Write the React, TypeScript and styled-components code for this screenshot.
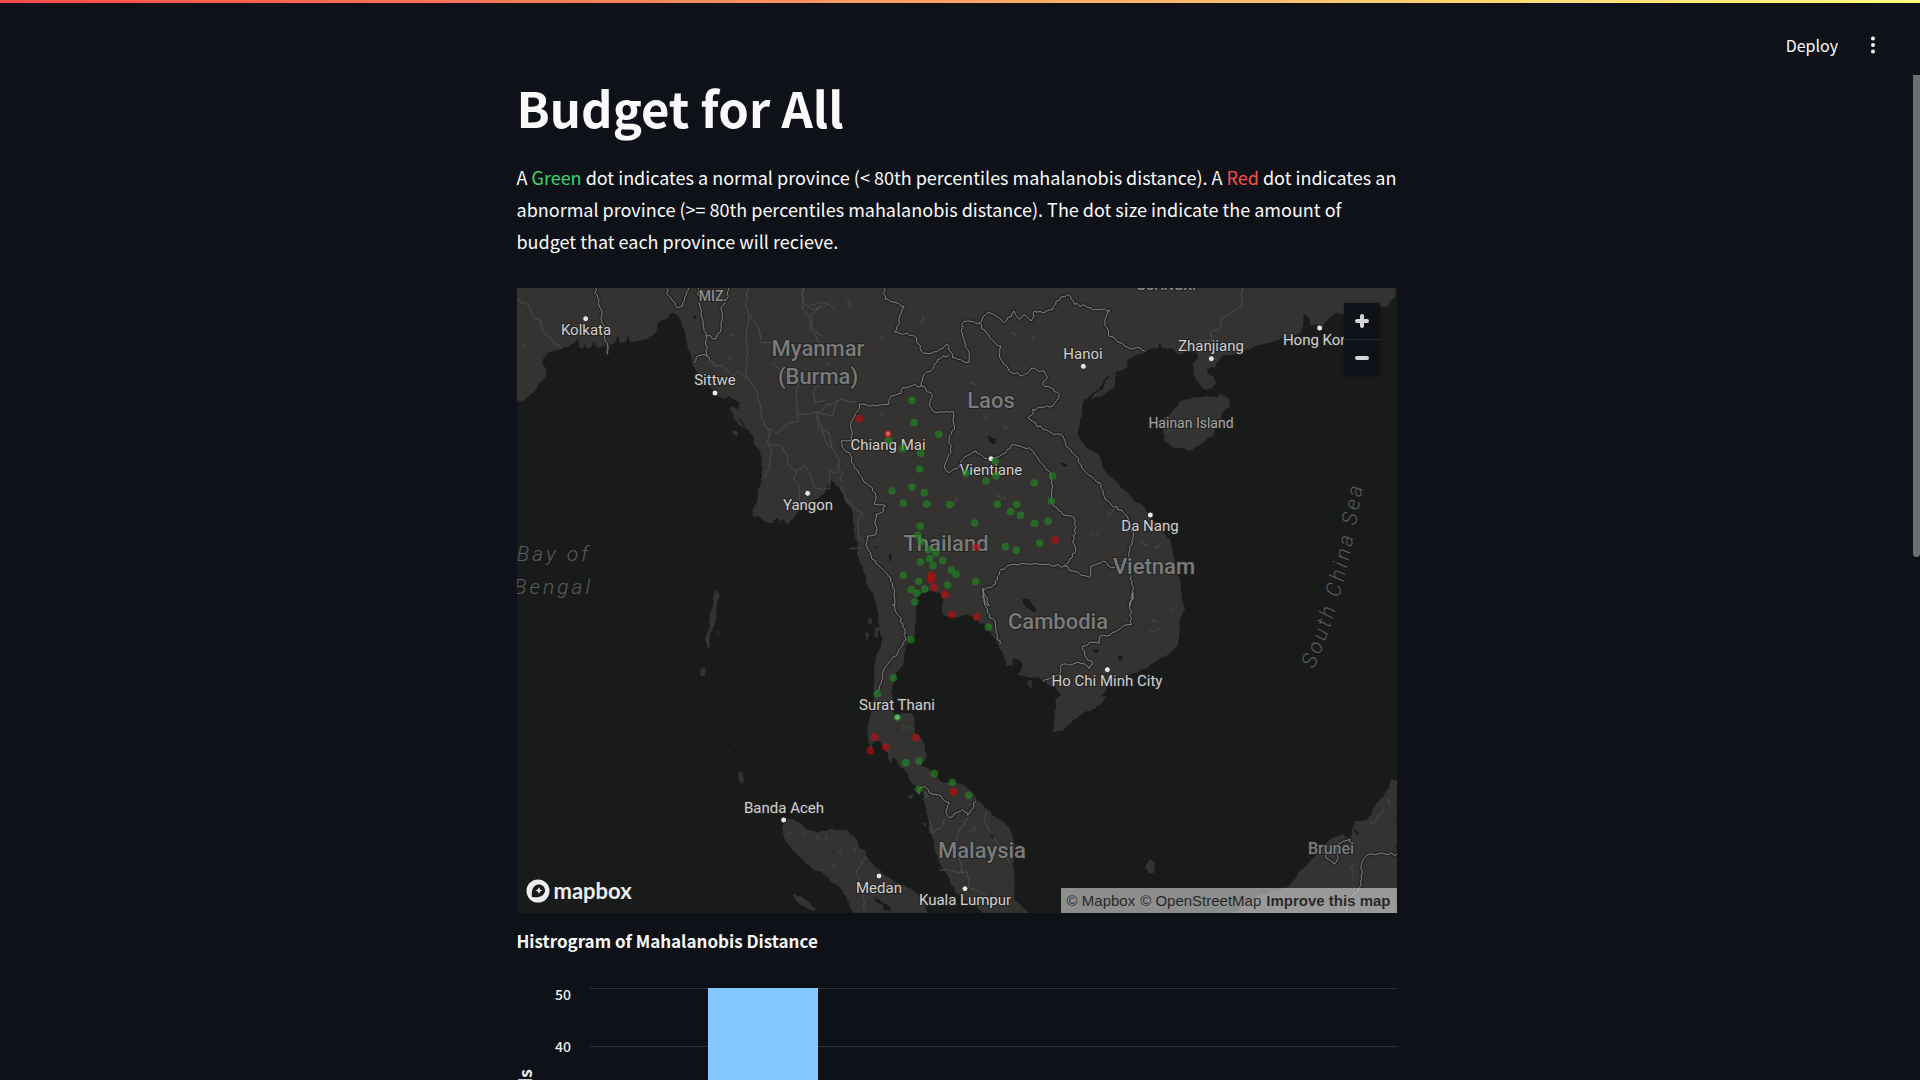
import React from "react";
import styled, { createGlobalStyle } from "styled-components";

const sans = '"Noto Sans CJK JP", "Noto Sans", sans-serif';
const mapFont = 'Roboto, "Noto Sans", sans-serif';

const GlobalStyle = createGlobalStyle`
  * { box-sizing: border-box; }
  body {
    margin: 0;
    background: #0e1117;
    color: #fafafa;
    font-family: ${sans};
  }
`;

const Page = styled.div`
  display: flex;
  flex-direction: column;
  height: 100vh;
  overflow: hidden;
  background: #0e1117;
`;

const Decoration = styled.div`
  flex: none;
  height: 3px;
  background: linear-gradient(90deg, #ff4b4b, #fffd80);
`;

const Header = styled.header`
  flex: none;
  display: flex;
  align-items: center;
  justify-content: flex-end;
  gap: 28px;
  height: 72px;
  padding: 12px 40px 0 0;
`;

const HeaderButton = styled.button`
  display: flex;
  align-items: center;
  justify-content: center;
  min-width: 14px;
  height: 32px;
  padding: 0;
  border: 0;
  background: none;
  color: #fafafa;
  font: 400 16px/32px ${sans};
  cursor: pointer;
`;

const Body = styled.div`
  flex: 1;
  display: flex;
  min-height: 0;
`;

const Main = styled.main`
  flex: 1;
  overflow-y: auto;
  scrollbar-width: none;
`;

const Track = styled.div`
  width: 7px;
`;

const Thumb = styled.div`
  height: 48%;
  border-radius: 0 0 4px 4px;
  background: #6e6f74;
`;

const Column = styled.div`
  display: flex;
  flex-direction: column;
  max-width: 880px;
  margin: 0 auto;
`;

const Title = styled.h1`
  margin: 0 0 22px;
  font-size: 49px;
  line-height: 64px;
  font-weight: 700;
`;

const Paragraph = styled.p`
  margin: 0 0 31px;
  font-size: 18px;
  line-height: 32px;
`;

const Mark = styled.span<{ $color: string }>`
  color: ${(p) => p.$color};
`;

const MapBox = styled.section`
  position: relative;
  overflow: hidden;
  background: #191a1a;
`;

const MapDrawing = styled.svg`
  display: block;
  width: 100%;
  height: auto;
`;

const Label = styled.text<{ $kind: Kind }>`
  font-family: ${mapFont};
  font-size: ${(p) => kinds[p.$kind].size}px;
  font-weight: ${(p) => kinds[p.$kind].weight};
  fill: ${(p) => kinds[p.$kind].fill};
  stroke: #232323;
  stroke-width: 2px;
  paint-order: stroke;
`;

const SeaLabel = styled.text`
  font-family: ${mapFont};
  font-size: 21px;
  font-style: italic;
  font-weight: 300;
  letter-spacing: 3px;
  fill: #5a5b5b;
`;

const Zoom = styled.div`
  position: absolute;
  top: 15px;
  right: 17px;
  display: flex;
  flex-direction: column;
  background: #0e1117;
  box-shadow: 0 0 0 2px rgba(0, 0, 0, 0.1);
`;

const ZoomButton = styled.button`
  display: flex;
  align-items: center;
  justify-content: center;
  width: 36px;
  height: 36px;
  padding: 0;
  border: 0;
  background: none;
  color: #d6d6d6;
  cursor: pointer;

  & + & {
    height: 37px;
    border-top: 1px solid #262730;
  }
`;

const Logo = styled.a`
  position: absolute;
  left: 9px;
  bottom: 10px;
  display: flex;
  align-items: center;
  gap: 4px;
  color: #eee;
  font: 700 22px/24px Lato, sans-serif;
  text-decoration: none;
`;

const Attribution = styled.div`
  position: absolute;
  right: 0;
  bottom: 0;
  display: flex;
  gap: 5px;
  padding: 0 6px;
  background: rgba(255, 255, 255, 0.5);
  font: 15px/25px "Liberation Sans", sans-serif;
`;

const Credit = styled.a<{ $strong?: boolean }>`
  color: rgba(0, 0, 0, 0.75);
  font-weight: ${(p) => (p.$strong ? 700 : 400)};
  text-decoration: none;
`;

const ChartTitle = styled.h2`
  margin: 12px 0 2px;
  font-size: 17px;
  line-height: 32px;
  font-weight: 700;
`;

const Chart = styled.svg`
  display: block;
  width: 100%;
  height: auto;
`;

const AxisText = styled.text<{ $title?: boolean }>`
  font-family: ${sans};
  font-size: ${(p) => (p.$title ? 18 : 14)}px;
  font-weight: ${(p) => (p.$title ? 700 : 500)};
  fill: #e6eaf1;
`;

type Kind = "city" | "country" | "small" | "state" | "island";
const kinds: Record<Kind, { size: number; weight: number; fill: string }> = {
  city: { size: 15, weight: 400, fill: "#cfcfcf" },
  island: { size: 14, weight: 400, fill: "#a3a3a3" },
  country: { size: 22, weight: 500, fill: "#7b7b7b" },
  small: { size: 16, weight: 500, fill: "#7b7b7b" },
  state: { size: 14, weight: 500, fill: "#8c8c8c" },
};

/* The survey is split in six sheets at three units per map pixel.
   A letter in a line of points switches to that sheet. */
const sheets: Record<string, [number, number]> = {
  A: [-3, -6],
  B: [837, -6],
  C: [1719, -6],
  D: [-3, 894],
  E: [837, 894],
  F: [1719, 894],
};

type Pt = [number, number];
const at = (s: string, x: number, y: number): Pt => [(sheets[s][0] + x) / 3, (sheets[s][1] + y) / 3];

function points(src: string): Pt[] {
  let sheet = "A";
  const out: Pt[] = [];
  src.trim().split(/\s+/).forEach((tok) => {
    if (sheets[tok]) sheet = tok;
    else {
      const [x, y] = tok.split(",").map(Number);
      out.push(at(sheet, x, y));
    }
  });
  return out;
}

/* Adds fine bends between surveyed points, the same on every draw. */
function rough(src: string, amount: number, close = false) {
  const base = points(src);
  if (close) base.push(base[0]);
  let seed = 7;
  const rnd = () => {
    seed = (seed * 16807) % 2147483647;
    return seed / 2147483647 - 0.5;
  };
  const out: Pt[] = [base[0]];
  for (let i = 1; i < base.length; i++) {
    const [ax, ay] = base[i - 1];
    const [bx, by] = base[i];
    const len = Math.hypot(bx - ax, by - ay);
    const n = Math.max(1, Math.round(len / 3));
    const edge = len > 200;
    for (let k = 1; k <= n; k++) {
      const t = k / n;
      const j = k === n || edge ? 0 : rnd() * amount;
      out.push([ax + (bx - ax) * t - ((by - ay) / len) * j, ay + (by - ay) * t + ((bx - ax) / len) * j]);
    }
  }
  return "M" + out.map((p) => p[0].toFixed(1) + " " + p[1].toFixed(1)).join("L") + (close ? "Z" : "");
}

const land = [
  `A 0,348 20,345 40,330 60,310 72,290 92,268 90,250 80,235 82,215 100,198 130,190 160,180 185,160 190,185 200,188 205,170 215,188 225,185 232,165 245,185 262,180 290,175 300,165 305,150 310,172 330,168 338,148 345,168 365,165 385,160 410,150 420,140 425,115 435,105 450,100 460,88 472,80 485,90 495,105 505,130 510,160 515,190 525,205 528,230 540,255 550,270 570,290 585,305 600,325 620,338 640,330 655,340 672,350 668,370 650,360 640,368 655,390 675,400 685,420 700,435 712,450 712,470 725,485 735,510 735,540 740,550 735,590 725,610 725,640 715,660 710,690 730,690 745,705 770,712 785,695 790,712 800,700 812,716 830,700 850,670 870,660 900,640 925,625 935,600 945,580
   B 115,590 140,620 150,650 165,665 170,700 175,740 185,780 185,810 200,850 210,870 215,900 230,920 240,950
   E 245,80 250,130 260,160 250,190 240,220 235,260 232,300 235,340 225,380 215,420 215,450 222,500 232,470 240,465 255,470 270,495 285,530 288,510 300,520 310,540 335,560 340,580 355,598 375,610 385,650 392,670 395,700 400,740 415,765 415,790 425,810 430,830 440,850 460,880 475,910 500,940 545,965 565,985 700,985 680,965 655,940 655,870 650,840 655,770 650,745 630,715 600,695 575,670 545,645 530,620 500,595 480,590 440,590 425,575 410,560 395,545 375,540 390,515 390,500 380,460 360,445 355,395 345,380 320,380 305,400 290,375 288,310 295,280 300,260 320,240 325,200 335,170 355,150 360,110 360,50 365,25 400,15 430,20 442,40 440,85 465,92 480,95 500,88 520,88 545,105 570,120 585,140 600,160 610,190 625,210 630,240 650,240 650,220 670,222 678,240 665,265 690,272 730,275 755,295 780,305 795,325 780,340 775,400 770,440 800,435 820,415 850,390 890,370 920,350
   F 48,330 30,330 50,310 55,290 75,285 100,280 130,262 160,250 200,225 240,200 262,180 268,130 270,100 285,65 275,40 272,0
   C 272,895 265,870 255,830 245,790 240,760 215,735 180,690 165,665 130,640 100,610 60,570 40,545 30,515 20,500 0,490
   B 875,488 860,470 845,440 850,420 858,390 860,350 880,330 910,310 930,275 960,255
   B 958,300 920,330
   C 0,340 20,320 40,310 45,285 65,262 90,255 110,245 115,220 140,205 165,200 180,190 205,185 210,165 215,185 250,190 265,205 290,195 320,200 325,215 308,235 310,260 325,290 340,308 365,308 378,290 370,270 355,265 350,250 375,245 380,230 395,210 420,208 450,200 480,190 500,178 530,172 560,165 575,155 590,170 600,150 630,140 640,120 642,85 655,95 665,120 680,115 690,130 720,95 740,80 760,85 800,70 890,62 900,45 918,30 921,0 A 0,0`,
  `D 800,705 800,740 805,760 825,785 860,820 890,850 920,860 940,880 960,895 E 140,915 150,930 175,985 395,985 385,940 360,920 340,905 300,890 270,870 240,845 210,810 210,795 190,785 185,765 150,730 100,730 70,738 30,730 0,705 D 820,698`,
  "D 838,935 850,930 870,942 902,970 895,975 865,958 840,945",
  "E -10,925 20,935 60,970 50,975 10,955",
  "F 430,985 500,930 590,905 605,890 630,855 660,825 680,800 700,780 720,760 760,745 780,760 795,705 815,705 835,700 855,660 870,640 895,610 905,580 921,585 921,985",
  "C 218,400 240,385 265,355 270,345 310,335 350,330 385,335 388,322 415,335 420,360 395,385 380,420 370,450 345,465 325,480 300,495 280,485 250,485 222,465 220,430",
  "D 600,12 608,20 608,40 600,65 602,95 590,130 582,150 582,180 575,188 568,165 570,150 580,125 582,85 590,60 592,30",
  "D 560,243 570,255 568,272 555,270 553,255",
  "D 665,562 680,560 684,578 678,594 668,580",
  "D 604,132 610,134 606,148",
  "D 632,492 640,494 638,500",
  "F 180,820 195,835 192,860 175,862 165,842",
  "A 650,435 668,440 662,452 650,445",
  "A 650,388 670,395 682,425 665,415",
  "E 695,285 710,285 705,310 698,300",
  "E 335,630 355,625 350,638 338,638",
  "E 215,100 230,98 228,115 216,112",
  "E 208,140 222,145 215,165 210,155",
  "E 236,125 248,122 244,160 236,150",
  "E 380,712 392,712 388,722",
];

const water = [
  "B 575,450 600,460 595,475 580,470",
  "E 680,38 700,40 712,60 722,75 712,78 690,62 680,50",
  "B 280,800 286,805 286,830 280,822",
  "B 235,780 245,783 237,790",
  "B 795,530 818,538 805,542",
  "E 580,740 597,750 588,760",
  "E 235,935 255,945 285,965 285,975 262,972 262,958 240,948",
  "F 85,210 98,208 95,222 86,222",
  "F 10,192 26,194 18,202",
  "E 893,192 910,192 902,204",
  "F 790,730 806,738 800,750",
  "A 534,88 542,90 536,102",
];

const borders = [
  "A 572,150 600,158 615,130 618,90 615,65 632,40 640,4",
  "A 450,4 458,30 470,45 485,65 500,60 505,35 518,4",
  "A 235,4 245,35 250,60 258,75 255,95 265,120 265,150 275,180 275,205",
  "A 545,4 552,60 560,100 570,150 572,210 555,208 540,215 535,230",
  "A 572,210 580,222",
  "B 262,4 268,40 300,50 325,62 310,95 310,115 295,138 350,148 362,155 375,195 400,203 430,190 455,175 470,215 500,225 520,228 515,190 500,150 497,115 515,105 548,112 575,80 600,90 625,110 655,75 670,100 685,85 705,105 715,75 740,80 770,70 780,45 815,25 835,55 870,60 890,72 C 25,70 60,72 45,110 55,150 90,170 120,188 150,185 165,195",
  "B 460,205 425,220 410,250 385,265 375,300",
  "B 375,300 350,298 320,305 315,322 285,330 278,355 240,360 190,355 185,375 170,400 165,430 170,465 150,465 135,465 145,490 160,500 175,545 200,580 230,605 240,640 235,655 268,660 255,680 240,685 240,745 215,750 210,775 225,810 260,850 285,875 295,920 295,960 E 290,55 310,90 330,155 305,200 260,260 250,300 240,320",
  "B 375,300 390,310 408,325 400,360 415,378 470,375 475,420 460,460 465,500 445,540 460,560 490,540 500,520 540,495 575,518 600,515 630,500 645,478 700,485 730,525 765,565 770,600 765,645 800,685 835,695 840,725 830,765 838,800 805,840",
  "B 548,112 570,140 600,175 615,180 610,210 640,255 680,270 705,248 745,255 755,275 740,295 765,305 790,325 770,360 710,370 710,385 695,395 740,430 800,450 810,480 840,510 870,560 C 30,590 45,640 100,680 115,700 130,750 120,790 120,880 130,910 120,960 F 130,20 120,70 125,115 100,120 50,150 30,150 28,172 0,168 E 860,180 865,205 890,235 880,248 855,232 795,238 790,265 740,285",
  "B 805,840 740,835 650,835 615,850 605,880 585,905 562,912 565,940 580,960 E 560,5 565,50 575,70 580,95 598,105 600,140 612,175",
  "B 805,840 830,855 880,875 885,840 C 40,825 65,845 90,838 115,830",
  "E 370,625 372,605 385,600 400,620 435,630 440,640 460,650 450,680 460,695 500,670 515,688 540,645",
  "F 921,805 880,802 830,808 815,830 815,880 805,915 790,925 770,975",
  "F 700,800 715,820 732,835 745,815 735,780 760,765 780,760 790,800",
];

const districts = [
  "A 0,40 40,60 50,90 75,105 80,135 110,165 135,185",
  "A 695,6 690,60 700,90 690,150 695,200 690,250 695,275 720,310 740,400 760,440 755,470 765,490 760,540 750,572 740,570",
  "A 700,85 730,130 735,170 780,168",
  "A 580,222 600,240 620,240 650,270 665,255 690,275",
  "A 760,430 785,440 810,415 845,405 845,385 910,380 930,360 960,350",
  "A 845,385 840,320 850,280 790,250 770,230",
  "A 860,6 860,70 890,100 880,130 900,150 920,190",
  "A 880,60 910,50 940,55 955,70",
  "A 765,480 790,475 810,500 820,540 840,555 865,537 885,570 895,605 940,610 940,550 960,560",
  "A 840,555 835,580 850,600 850,640",
  "A 900,385 920,430 930,470 950,490",
  "A 910,290 890,320 900,350 930,340",
  "B 60,380 70,430 100,440 110,490 130,520 125,550 140,560 135,585",
  "B 60,380 110,390 120,345 140,340 180,350",
  "B 135,600 150,640 180,670 200,680 185,710 190,760 210,770",
  "B 160,790 190,785",
  "B 20,6 20,50 50,70 80,60 40,90 50,130 80,150",
  "C 455,6 455,60 395,100 390,130 365,135 362,165 330,165 320,195",
  "E 450,690 440,720 410,740 400,705",
  "E 515,690 505,715 490,730 480,770 500,860 430,850",
  "E 570,680 565,710 585,740 605,770 640,830",
  "E 500,860 515,860 520,905 560,920 600,960",
  "E 210,810 180,860 200,900 205,970",
  "E 385,620 395,625 380,640",
];

const relief = [
  "B 600,630 630,640", "B 480,630 475,660", "B 120,180 130,190", "B 640,140 660,150", "B 90,230 100,240",
  "B 290,490 305,500", "B 420,760 440,775", "B 150,40 165,60", "B 250,160 262,155", "B 380,90 375,110",
  "B 520,290 540,300", "B 620,420 632,430", "B 560,385 570,400", "B 700,150 712,160", "B 250,390 262,382",
  "C 50,690 75,670", "C 150,770 175,775", "C 195,790 210,780", "C 0,750 25,740", "C 230,440 245,432",
  "F 180,140 210,128", "F 185,105 200,110", "F 240,80 255,70", "F 840,720 860,700 880,670", "F 785,830 790,880",
  "F 890,640 900,660", "F 845,760 850,765", "D 815,750 832,740", "D 857,738 866,746", "D 928,750 930,765",
  "D 945,830 955,850", "E 60,750 70,762", "E 125,800 138,806", "E 170,780 175,800", "E 318,415 322,435",
  "E 335,425 350,430", "E 520,740 545,720", "A 640,150 655,148", "A 20,180 30,175", "A 640,210 640,225",
];

const green = `B 348,343 354,410 428,445 278,463 319,488 374,502 371,549 348,604 288,615 385,620 322,651 392,654 461,656 510,562 597,526 600,569 570,585 715,591 769,570 766,645 604,655 662,655 644,677 674,688 716,712 757,706 536,711 731,771 628,782 661,793 373,721 365,748 375,767 397,791 419,800 401,818 440,824 373,828 411,839 466,852 480,865 322,868 368,886 539,886 455,897 346,911 386,909 363,922 357,948
 E 345,161 292,276 244,323 304,394 329,530 369,525 415,563 469,589 368,610 518,628 577,124`;
const red = `B 190,398 276,444 541,784 777,762 407,868 406,882 414,905 447,926 E 468,86 541,92 236,454 223,494 269,484 360,455 472,617`;

const cities = `A 209,98 597,321 875,622 B 276,443 585,518 862,241 C 364,218 689,126 181,687 F 52,251 E 304,394 249,870 507,908 D 803,702`;

const labels: [string, string, number, number, Kind][] = [
  ["Kolkata", "A", 210, 148, "city"],
  ["Sittwe", "A", 597, 298, "city"],
  ["Yangon", "A", 875, 672, "city"],
  ["MIZ.", "A", 592, 45, "state"],
  ["Myanmar", "B", 66, 211, "country"],
  ["(Burma)", "B", 66, 294, "country"],
  ["Chiang Mai", "B", 277, 491, "city"],
  ["Laos", "B", 586, 365, "country"],
  ["Vientiane", "B", 585, 566, "city"],
  ["Hanoi", "B", 862, 219, "city"],
  ["Thailand", "B", 451, 794, "country"],
  ["GUANGXI", "C", 227, 12, "state"],
  ["Zhanjiang", "C", 363, 196, "city"],
  ["Hong Kong", "C", 689, 176, "city"],
  ["Hainan Island", "C", 303, 426, "island"],
  ["Da Nang", "C", 181, 735, "city"],
  ["Vietnam", "C", 192, 865, "country"],
  ["Cambodia", "E", 785, 129, "country"],
  ["Ho Chi Minh City", "F", 51, 301, "city"],
  ["Surat Thani", "E", 304, 371, "city"],
  ["Banda Aceh", "D", 803, 680, "city"],
  ["Medan", "E", 250, 920, "city"],
  ["Kuala Lumpur", "E", 508, 958, "city"],
  ["Malaysia", "E", 558, 816, "country"],
  ["Brunei", "F", 724, 803, "small"],
];

function Cartography() {
  return (
    <MapDrawing viewBox="0 0 880 625" role="img" aria-label="Map of provinces">
      <g fill="#343332">
        {land.map((d) => <path key={d} d={rough(d, 2, true)} />)}
      </g>
      <g fill="none" stroke="#3f3e3e" strokeWidth="2">
        {relief.map((d) => <path key={d} d={rough(d, 3)} />)}
      </g>
      <g fill="#191a1a">
        {water.map((d) => <path key={d} d={rough(d, 1, true)} />)}
      </g>
      <g fill="none" stroke="#4d4d4d" strokeWidth="1">
        {districts.map((d) => <path key={d} d={rough(d, 2)} />)}
      </g>
      <g fill="none" stroke="#262626" strokeWidth="4" strokeLinejoin="round">
        {borders.map((d) => <path key={d} d={rough(d, 3)} />)}
      </g>
      <g fill="none" stroke="#838383" strokeWidth="1" strokeLinejoin="round">
        {borders.map((d) => <path key={d} d={rough(d, 3)} />)}
      </g>
      <SeaLabel x="74" y="273" textAnchor="end">Bay of</SeaLabel>
      <SeaLabel x="76" y="306" textAnchor="end">Bengal</SeaLabel>
      <path id="sea-line" fill="none" d="M797 381 Q832 300 848 180" />
      <SeaLabel><textPath href="#sea-line">South China Sea</textPath></SeaLabel>
      {labels.map(([text, s, x, y, kind]) => {
        const [px, py] = at(s, x, y);
        return <Label key={text} $kind={kind} x={Math.round(px)} y={Math.round(py)} textAnchor="middle">{text}</Label>;
      })}
      <g fill="#e6e6e6" stroke="#222" strokeWidth="1">
        {points(cities).map(([x, y]) => <circle key={x} cx={x} cy={y} r="3" />)}
      </g>
      <g fill="rgb(33,140,33)" fillOpacity="0.62">
        {points(green).map(([x, y], i) => <circle key={i} cx={x} cy={y} r="3.8" />)}
      </g>
      <g fill="rgb(200,10,10)" fillOpacity="0.62">
        {points(red).map(([x, y], i) => <circle key={i} cx={x} cy={y} r="3.8" />)}
      </g>
    </MapDrawing>
  );
}

function Histogram() {
  return (
    <Chart viewBox="0 0 880 360" role="img" aria-label="Histogram of Mahalanobis distance">
      {[50, 40, 30, 20, 10, 0].map((v, i) => {
        const y = 30 + Math.round(i * 57.5);
        return (
          <g key={v}>
            <rect x="73" y={y - 1} width="807" height="1" fill="#2f3139" />
            <AxisText x="54" y={i === 0 ? 41 : y + 5} textAnchor="end">{v}</AxisText>
          </g>
        );
      })}
      <rect x="191" y="29" width="110" height="288" fill="#83c9ff" />
      <AxisText $title textAnchor="end" transform="translate(15 110) rotate(-90)">Count of Records</AxisText>
    </Chart>
  );
}

export default function App() {
  return (
    <Page>
      <GlobalStyle />
      <Decoration />
      <Header>
        <HeaderButton>Deploy</HeaderButton>
        <HeaderButton aria-label="Main menu">
          <svg width="4" height="18" viewBox="0 0 4 18" fill="#fafafa">
            <circle cx="2" cy="2.5" r="2" />
            <circle cx="2" cy="9" r="2" />
            <circle cx="2" cy="15.5" r="2" />
          </svg>
        </HeaderButton>
      </Header>
      <Body>
        <Main>
          <Column>
            <Title>Budget for All</Title>
            <Paragraph>
              A <Mark $color="#3dd56d">Green</Mark> dot indicates a normal province (&lt; 80th percentiles mahalanobis
              distance). A <Mark $color="#ff4b4b">Red</Mark> dot indicates an abnormal province (&gt;= 80th percentiles
              mahalanobis distance). The dot size indicate the amount of budget that each province will recieve.
            </Paragraph>
            <MapBox>
              <Cartography />
              <Zoom>
                <ZoomButton aria-label="Zoom in">
                  <svg width="16" height="16" viewBox="0 0 16 16" stroke="currentColor" strokeWidth="4" strokeLinecap="round">
                    <path d="M8 3v10M3 8h10" />
                  </svg>
                </ZoomButton>
                <ZoomButton aria-label="Zoom out">
                  <svg width="16" height="16" viewBox="0 0 16 16" stroke="currentColor" strokeWidth="4" strokeLinecap="round">
                    <path d="M3 8h10" />
                  </svg>
                </ZoomButton>
              </Zoom>
              <Logo href="#mapbox">
                <svg width="24" height="24" viewBox="0 0 24 24">
                  <circle cx="12" cy="12" r="11.5" fill="#eee" />
                  <path d="M6 18C5.200 12.500 6.400 9.400 8.300 7.400C10.800 4.900 14.900 4.900 17.300 7.200C19.600 9.600 19.600 13.300 17.200 15.700C14.300 18.500 9.500 18.500 6 18Z" fill="#191a1a" />
                  <path d="M13 8l1.100 2.400 2.400 1.100-2.400 1.100L13 15l-1.100-2.400-2.400-1.100 2.400-1.100Z" fill="#eee" />
                </svg>
                mapbox
              </Logo>
              <Attribution>
                <Credit href="#mapbox-terms">© Mapbox</Credit>
                <Credit href="#osm">© OpenStreetMap</Credit>
                <Credit href="#feedback" $strong>Improve this map</Credit>
              </Attribution>
            </MapBox>
            <ChartTitle>Histrogram of Mahalanobis Distance</ChartTitle>
            <Histogram />
          </Column>
        </Main>
        <Track><Thumb /></Track>
      </Body>
    </Page>
  );
}
